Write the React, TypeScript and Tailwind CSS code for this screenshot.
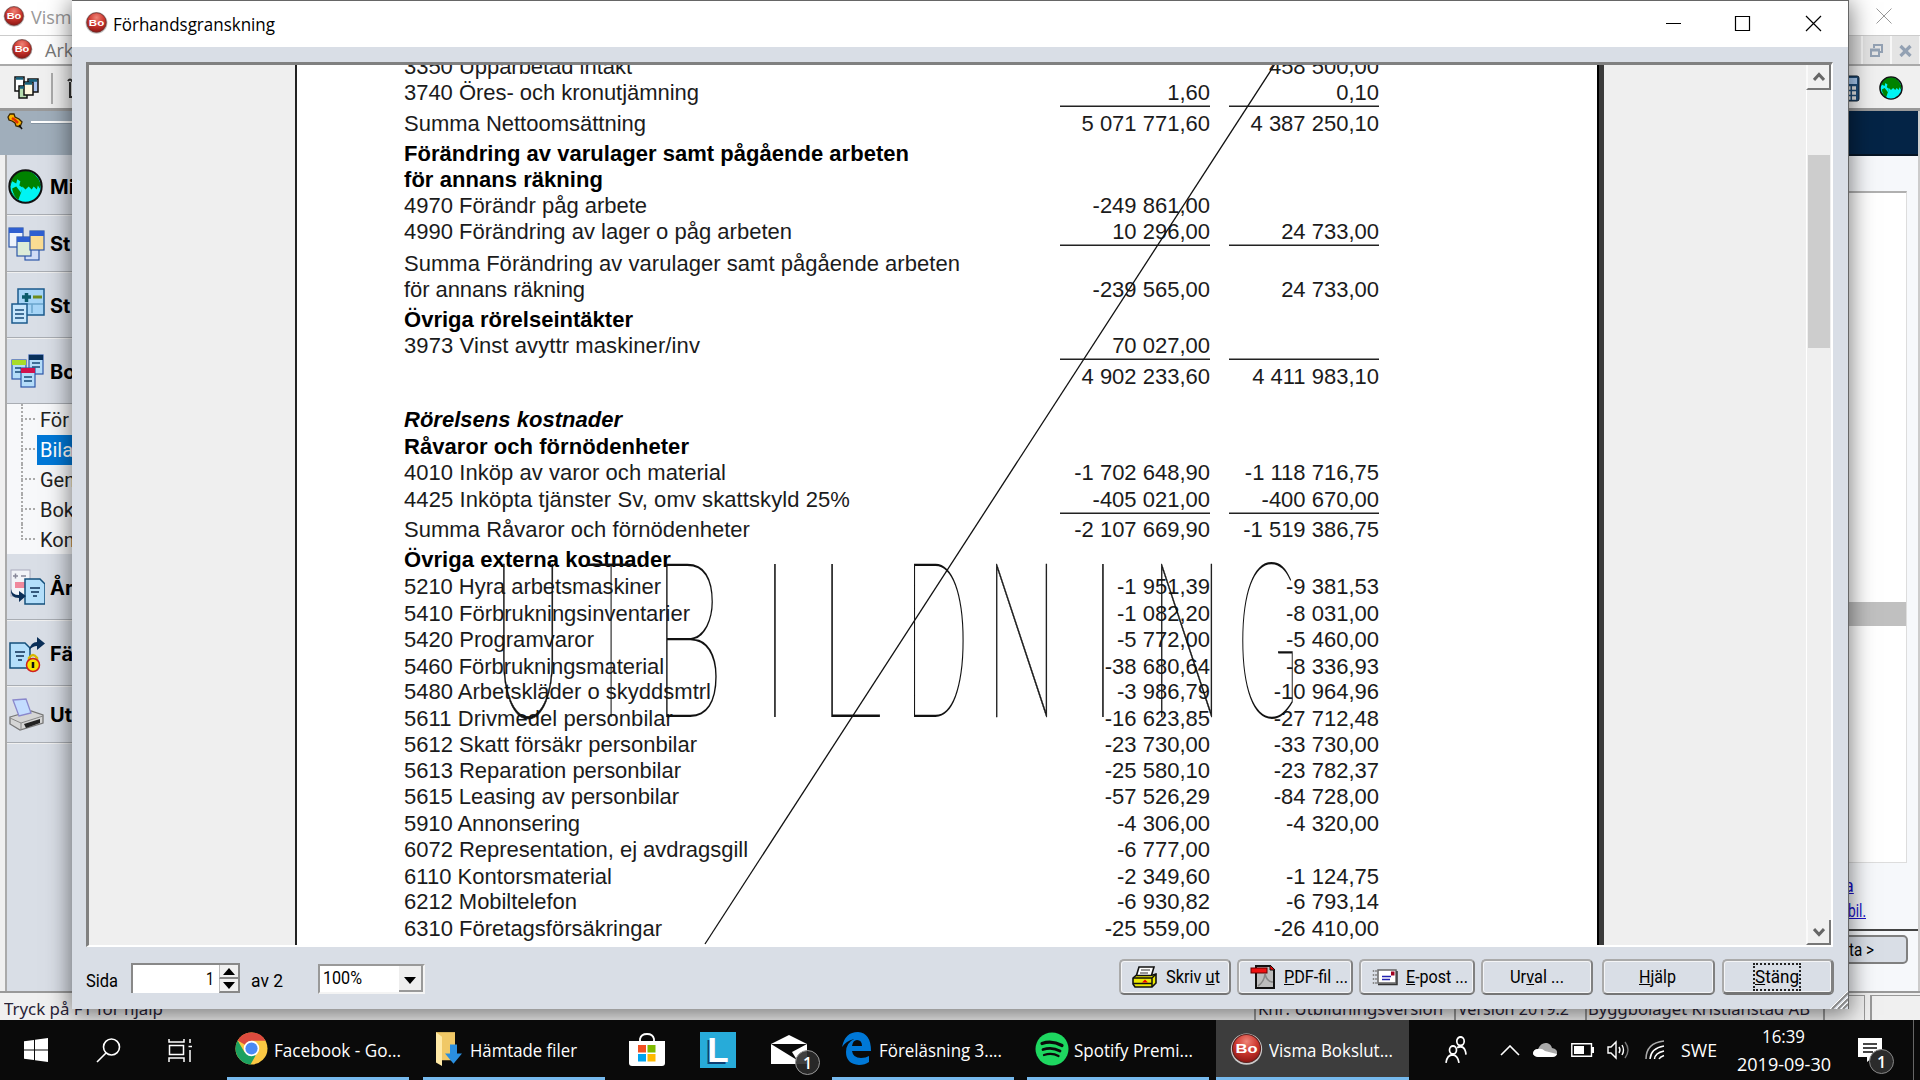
import React, { useLayoutEffect, useRef } from "react";

/* Text set to an exact width, by tracking or by horizontal scaling. */
function Fit({ w, track = false, className = "", children }: { w: number; track?: boolean; className?: string; children: React.ReactNode }) {
  const ref = useRef<HTMLSpanElement>(null);
  useLayoutEffect(() => {
    const el = ref.current;
    if (!el) return;
    el.style.transform = "none";
    el.style.letterSpacing = "0px";
    const natural = el.getBoundingClientRect().width;
    if (track) {
      const n = (el.textContent || "").length;
      el.style.letterSpacing = (w - natural) / n + "px";
    } else {
      el.style.transform = `scaleX(${w / natural})`;
    }
  }, [w, track]);
  return (
    <span className={`block shrink-0 whitespace-nowrap ${className}`} style={{ width: w }}>
      <span ref={ref} className="inline-block origin-left whitespace-pre">{children}</span>
    </span>
  );
}

function Bo({ size, ring = false }: { size: number; ring?: boolean }) {
  return (
    <svg width={size} height={size} viewBox="0 0 24 24" className="shrink-0">
      <defs>
        <radialGradient id="bo" cx="50%" cy="25%" r="75%">
          <stop offset="0" stopColor="#ee8478" />
          <stop offset=".5" stopColor="#cf3a31" />
          <stop offset="1" stopColor="#8e1613" />
        </radialGradient>
      </defs>
      <circle cx="12" cy="12.4" r="11.4" fill={ring ? "#c9c9c9" : "#8d8d8d"} opacity={ring ? 1 : 0.55} />
      <circle cx="12" cy="12" r="10.2" fill="url(#bo)" stroke={ring ? "#5b2421" : "#6d2a27"} strokeWidth=".8" />
      <text x="12" y="15.4" textAnchor="middle" textLength="16" lengthAdjust="spacingAndGlyphs" fontSize="9.5" fontWeight="700" fontFamily="Liberation Sans, sans-serif" fill="#fff">Bo</text>
    </svg>
  );
}

function Globe({ size }: { size: number }) {
  return (
    <svg width={size} height={size} viewBox="0 0 34 34" className="shrink-0">
      <circle cx="17" cy="17" r="15.5" fill="#00f4f4" />
      <path d="M4 9 Q9 1.5 17 1.5 Q27 2 32 15 L31 19 L29 16 L28 20 L25 17 L23 20 L20 17 L17 20 L14 17 L13 22 L10 30 Q2 24 1.5 17Z" fill="#008200" />
      <path d="M2 17 L4 12 L8 14 L9 10 L12 12 L11 16 L14 18 L13 22 L10 24 L8 20 L5 21 L8 27 Q2 23 2 17Z" fill="#00f4f4" />
      <path d="M4 19 L8 17 L12 22 L10 29 Q5 26 4 19Z" fill="#008200" />
      <circle cx="17" cy="17" r="15.7" fill="none" stroke="#111" strokeWidth="2" />
    </svg>
  );
}

type Row = { l?: string; w?: number; a?: string; b?: string; h: number; s?: "b" | "i"; rule?: boolean };

const rows: Row[] = [
  { l: "3350 Upparbetad intäkt", w: 228, b: "458 500,00", h: 16 },
  { l: "3740 Öres- och kronutjämning", w: 295, a: "1,60", b: "0,10", h: 26 },
  { l: "Summa Nettoomsättning", w: 242, a: "5 071 771,60", b: "4 387 250,10", h: 31, rule: true },
  { l: "Förändring av varulager samt pågående arbeten", w: 505, h: 30, s: "b" },
  { l: "för annans räkning", w: 199, h: 26, s: "b" },
  { l: "4970 Förändr påg arbete", w: 243, a: "-249 861,00", h: 26 },
  { l: "4990 Förändring av lager o påg arbeten", w: 388, a: "10 296,00", b: "24 733,00", h: 26 },
  { l: "Summa Förändring av varulager samt pågående arbeten", w: 556, h: 32, rule: true },
  { l: "för annans räkning", w: 181, a: "-239 565,00", b: "24 733,00", h: 26 },
  { l: "Övriga rörelseintäkter", w: 229, h: 30, s: "b" },
  { l: "3973 Vinst avyttr maskiner/inv", w: 296, a: "70 027,00", h: 26 },
  { a: "4 902 233,60", b: "4 411 983,10", h: 31, rule: true },
  { l: "Rörelsens kostnader", w: 218, h: 43, s: "i" },
  { l: "Råvaror och förnödenheter", w: 285, h: 27, s: "b" },
  { l: "4010 Inköp av varor och material", w: 322, a: "-1 702 648,90", b: "-1 118 716,75", h: 26 },
  { l: "4425 Inköpta tjänster Sv, omv skattskyld 25%", w: 446, a: "-405 021,00", b: "-400 670,00", h: 27 },
  { l: "Summa Råvaror och förnödenheter", w: 346, a: "-2 107 669,90", b: "-1 519 386,75", h: 30, rule: true },
  { l: "Övriga externa kostnader", w: 267, h: 30, s: "b" },
  { l: "5210 Hyra arbetsmaskiner", w: 257, a: "-1 951,39", b: "-9 381,53", h: 27 },
  { l: "5410 Förbrukningsinventarier", w: 286, a: "-1 082,20", b: "-8 031,00", h: 27 },
  { l: "5420 Programvaror", w: 190, a: "-5 772,00", b: "-5 460,00", h: 26 },
  { l: "5460 Förbrukningsmaterial", w: 260, a: "-38 680,64", b: "-8 336,93", h: 27 },
  { l: "5480 Arbetskläder o skyddsmtrl", w: 307, a: "-3 986,79", b: "-10 964,96", h: 25 },
  { l: "5611 Drivmedel personbilar", w: 269, a: "-16 623,85", b: "-27 712,48", h: 27 },
  { l: "5612 Skatt försäkr personbilar", w: 293, a: "-23 730,00", b: "-33 730,00", h: 26 },
  { l: "5613 Reparation personbilar", w: 277, a: "-25 580,10", b: "-23 782,37", h: 26 },
  { l: "5615 Leasing av personbilar", w: 275, a: "-57 526,29", b: "-84 728,00", h: 26 },
  { l: "5910 Annonsering", w: 176, a: "-4 306,00", b: "-4 320,00", h: 27 },
  { l: "6072 Representation, ej avdragsgill", w: 344, a: "-6 777,00", h: 26 },
  { l: "6110 Kontorsmaterial", w: 208, a: "-2 349,60", b: "-1 124,75", h: 27 },
  { l: "6212 Mobiltelefon", w: 173, a: "-6 930,82", b: "-6 793,14", h: 25 },
  { l: "6310 Företagsförsäkringar", w: 258, a: "-25 559,00", b: "-26 410,00", h: 27 },
];

function Amount({ v, rule }: { v?: string; rule?: boolean }) {
  return (
    <div className={`flex h-full w-[150px] shrink-0 items-end justify-end ${rule ? "shadow-[0_-1.5px_0_#222]" : ""}`}>
      <span className="whitespace-pre">{v}</span>
    </div>
  );
}

const mark: { c: string; x: number; w: number }[] = [
  { c: "U", x: 503, w: 50 }, { c: "T", x: 587, w: 48 }, { c: "B", x: 666, w: 51 }, { c: "I", x: 774, w: 2 }, { c: "L", x: 831, w: 49 },
  { c: "D", x: 914, w: 50 }, { c: "N", x: 996, w: 51 }, { c: "I", x: 1102, w: 2 }, { c: "N", x: 1161, w: 51 }, { c: "G", x: 1242, w: 51 },
];

/* Large hairline letters laid over the page; each is squeezed to its own slot. */
function MarkLetter({ c, x, w }: { c: string; x: number; w: number }) {
  const ref = useRef<HTMLSpanElement>(null);
  useLayoutEffect(() => {
    const el = ref.current;
    const ctx = document.createElement("canvas").getContext("2d");
    if (!el || !ctx) return;
    ctx.font = "100 218px Lato";
    const m = ctx.measureText(c);
    const ink = m.actualBoundingBoxRight + m.actualBoundingBoxLeft;
    const k = c === "I" ? 0.6 : w / ink;
    el.style.transform = `translateX(${m.actualBoundingBoxLeft * k}px) scaleX(${k})`;
  }, [c, w]);
  return (
    <span className="absolute top-[459px] h-[218px] leading-[218px]" style={{ left: x - 297 }}>
      <span ref={ref} className={`inline-block origin-left ${c === "U" || c === "N" ? "[-webkit-text-stroke:0.7px_#111]" : ""}`}>{c}</span>
    </span>
  );
}

function Report() {
  return (
    <div className="relative h-full w-[1302px] shrink-0 overflow-hidden border-l-2 border-[#222] bg-white font-['Liberation_Sans',Arial,sans-serif] text-[22px] leading-[28px] text-[#1b1b1b]">
      {rows.map((r, i) => (
        <div key={i} className="flex items-end pl-[107px]" style={{ height: r.h }}>
          <div className={`w-[656px] shrink-0 ${r.s === "b" ? "font-bold text-black" : r.s === "i" ? "font-bold text-black italic" : ""}`}>
            {r.l && <Fit w={r.w || 100} track>{r.l}</Fit>}
          </div>
          <Amount v={r.a} rule={r.rule} />
          <div className="w-[19px] shrink-0" />
          <Amount v={r.b} rule={r.rule} />
        </div>
      ))}
      <svg className="absolute inset-0" width="1300" height="880" viewBox="297 65 1300 880">
        <line x1="1274.4" y1="65" x2="705" y2="944" stroke="#111" strokeWidth="1.3" />
      </svg>
      <div className="absolute inset-0 font-['Lato',sans-serif] text-[218px] font-thin text-[#111]">
        {mark.map((m, i) => <MarkLetter key={i} {...m} />)}
      </div>
    </div>
  );
}

function ArrowButton({ down = false }: { down?: boolean }) {
  return (
    <div className="flex h-[25px] w-[25px] shrink-0 items-center justify-center border-r-2 border-b-2 border-l-2 border-r-[#777] border-b-[#777] border-l-[#fafafa] bg-[#f0f0f0]">
      <svg width="12" height="10" viewBox="0 0 12 10" fill="none" stroke="#666" strokeWidth="3">
        {down ? <path d="M1 2 L6 7.5 L11 2" /> : <path d="M1 8 L6 2.5 L11 8" />}
      </svg>
    </div>
  );
}

function Button({ cls, children }: { cls: string; children: React.ReactNode }) {
  return (
    <div className={`flex h-[36px] shrink-0 items-center rounded-[5px] border-2 border-t-[#aaa] border-r-[#808080] border-b-[#757575] border-l-[#aaa] bg-[#d9dee6] shadow-[inset_0_0_0_1px_#f4f5f7] ${cls}`}>
      {children}
    </div>
  );
}

const ui = "font-['Roboto',sans-serif] text-[18px] leading-[24px] text-black";

function Footer() {
  return (
    <div className={`flex h-[62px] items-start pt-[12px] pl-[14px] ${ui}`}>
      <Fit w={32} className="mt-[10px]">Sida</Fit>
      <div className="mt-[4px] ml-[13px] flex h-[30px] w-[109px] border-t-2 border-l-2 border-[#888] bg-white">
        <div className="flex flex-1 items-center justify-end pr-[5px]"><Fit w={8}>1</Fit></div>
        <div className="flex w-[21px] flex-col">
          {[0, 1].map((k) => (
            <div key={k} className="flex h-[14px] items-center justify-center border-r-2 border-b-2 border-l border-r-[#888] border-b-[#888] border-l-[#bbb] bg-[#f0f0f0]">
              <svg width="12" height="7" viewBox="0 0 12 7"><path d={k ? "M0 0H12L6 7Z" : "M0 7H12L6 0Z"} fill="#000" /></svg>
            </div>
          ))}
        </div>
      </div>
      <Fit w={32} className="mt-[10px] ml-[11px]">av 2</Fit>
      <div className="mt-[5px] ml-[35px] flex h-[30px] w-[107px] border-2 border-t-[#999] border-r-[#f4f4f4] border-b-[#f4f4f4] border-l-[#999] bg-white">
        <div className="flex-1 pl-[3px]"><Fit w={39}>100%</Fit></div>
        <div className="flex w-[24px] items-center justify-center border-r-2 border-b-2 border-[#999] bg-[#eee]">
          <svg width="12" height="7" viewBox="0 0 12 7" className="mt-1"><path d="M0 0H12L6 7Z" fill="#000" /></svg>
        </div>
      </div>
      <div className="ml-auto flex pr-[14px]">
        <Button cls="w-[112px] pl-[11px]">
          <svg width="26" height="23" viewBox="0 0 26 23" className="mr-[8px] shrink-0">
            <path d="M7 1H22L19 11H4Z" fill="#fff" stroke="#111" strokeWidth="1.6" />
            <path d="M9 4H18M8 7H16" stroke="#777" strokeWidth="1.5" />
            <path d="M1 12L4 9.5H19L24 8V17L20 21H3L1 18Z" fill="#ece800" stroke="#111" strokeWidth="1.6" />
            <path d="M1 12H20V21M20 12L24 8M1 17.5H20" fill="none" stroke="#111" strokeWidth="1.5" />
            <path d="M10 16.5L13 13.5L16 16.5Z" fill="#e00" />
          </svg>
          <Fit w={54}>Skriv <u>u</u>t</Fit>
        </Button>
        <Button cls="ml-[6px] w-[116px] pl-[11px]">
          <svg width="26" height="26" viewBox="0 0 26 26" className="mr-[8px] shrink-0">
            <path d="M6 2H20L24 6V24H6Z" fill="#bdbdbd" stroke="#111" strokeWidth="2" />
            <path d="M8 22Q14 18 15 10Q17 18 23 18" fill="none" stroke="#888" strokeWidth="1.6" />
            <path d="M20 1L25 6H20Z" fill="#e00" stroke="#111" />
            <rect x="1" y="4" width="16" height="5" fill="#f01010" stroke="#600" />
          </svg>
          <Fit w={64}><u>P</u>DF-fil ...</Fit>
        </Button>
        <Button cls="ml-[6px] w-[116px] pl-[11px]">
          <svg width="26" height="18" viewBox="0 0 26 18" className="mr-[8px] shrink-0">
            <path d="M1.5 2V16M4 2V16" stroke="#888" strokeWidth="1.5" strokeDasharray="2 2" />
            <rect x="6" y="2" width="18" height="13" fill="#fff" stroke="#666" strokeWidth="1.5" />
            <path d="M25 3V16.5H6" fill="none" stroke="#333" strokeWidth="1.5" />
            <path d="M10 8.5H19M10 11.5H18" stroke="#2222b0" strokeWidth="1.6" />
            <rect x="19" y="3.5" width="3.5" height="4" fill="#a00020" />
          </svg>
          <Fit w={62}><u>E</u>-post ...</Fit>
        </Button>
        <Button cls="ml-[6px] w-[112px] pl-[27px]"><Fit w={54}>Ur<u>v</u>al ...</Fit></Button>
        <Button cls="ml-[9px] w-[113px] pl-[35px]"><Fit w={37}><u>H</u>jälp</Fit></Button>
        <Button cls="ml-[7px] w-[112px] border-r-[3px] border-b-[3px] pl-[29px]">
          <div className="border-2 border-dotted border-[#222]"><Fit w={44}><u>S</u>täng</Fit></div>
        </Button>
      </div>
    </div>
  );
}

function Dialog() {
  return (
    <div className="absolute top-0 left-[72px] flex h-[1009px] w-[1777px] flex-col border-t border-r border-[#666] bg-[#d9dee6] shadow-[0_4px_22px_2px_rgba(0,0,0,0.5)]">
      <div className="flex h-[46px] shrink-0 items-start bg-white pt-[10px] pl-[13px]">
        <Bo size={23} />
        <Fit w={162} className="-mt-px ml-[5px] font-['Open_Sans',sans-serif] text-[18px] leading-[28px] text-black">Förhandsgranskning</Fit>
        <svg width="157" height="18" viewBox="0 0 157 18" fill="none" stroke="#000" strokeWidth="1.2" className="mt-[4px] mr-[26px] ml-auto">
          <path d="M1 8.5H16M70.5 1.5H84.5V15.5H70.5ZM141 1L156 16M156 1L141 16" />
        </svg>
      </div>
      <div className="mt-[15px] mr-[15px] ml-[14px] flex h-[885px] shrink-0 border-t-[3px] border-r-2 border-b-2 border-l-[3px] border-t-[#808080] border-r-white border-b-white border-l-[#808080] bg-[#efefef]">
        <div className="w-[206px] shrink-0" />
        <Report />
        <div className="h-full w-[7px] shrink-0 border-l-2 border-black bg-[#3b3b3b]" />
        <div className="ml-auto flex h-full w-[25px] shrink-0 flex-col">
          <ArrowButton />
          <div className="relative flex-1 border-l border-white">
            <div className="mt-[65px] ml-px h-[193px] w-[22px] bg-[#cdcdcd]" />
          </div>
          <ArrowButton down />
        </div>
      </div>
      <Footer />
      <svg className="absolute right-0 bottom-0" width="18" height="18" viewBox="0 0 18 18">
        <path d="M2 18L18 2M8 18L18 8M13 18L18 13" stroke="#888" strokeWidth="2" />
        <path d="M0 18L18 0M6 18L18 6M11 18L18 11" stroke="#fff" />
      </svg>
    </div>
  );
}

function WinIcon({ children }: { children: React.ReactNode }) {
  return <svg width="38" height="38" viewBox="0 0 38 38" className="shrink-0">{children}</svg>;
}

function MiniWindow({ x, y, fill, head = "#2f5fd0" }: { x: number; y: number; fill: string; head?: string }) {
  return (
    <g>
      <rect x={x} y={y} width="14" height="19" fill={fill} stroke="#2d57a8" strokeWidth="1.2" />
      <rect x={x} y={y} width="14" height="5" fill={head} />
    </g>
  );
}

const doc = (x: number, y: number) => (
  <g>
    <path d={`M${x} ${y}h15l5 5v20h-20z`} fill="#b4dffb" stroke="#14507c" strokeWidth="1.5" />
    <path d={`M${x + 5} ${y + 9}h10M${x + 6} ${y + 13}h8M${x + 8} ${y + 17}h4`} stroke="#0d2f55" strokeWidth="1.7" />
  </g>
);

function SideItem({ cls, label, children }: { cls: string; label: string; children: React.ReactNode }) {
  return (
    <div className={`flex shrink-0 items-center overflow-hidden border-b border-[#a9adb3] pt-[2px] shadow-[0_1px_0_#f0f0f0] ${cls}`}>
      <div className="w-[43px] shrink-0">{children}</div>
      <span className="whitespace-nowrap font-['Inter',sans-serif] text-[20px] font-bold text-black">{label}</span>
    </div>
  );
}

function Sidebar() {
  return (
    <div className="flex w-[72px] flex-col">
      <div className="flex h-[44px] items-start bg-[#a0aebb] pt-[2px] pl-[7px]">
        <svg width="17" height="17" viewBox="0 0 17 17">
          <path d="M1 4L3 1H7L8 4L12 6L15 9L13 14L9 13L8 10L5 8L2 7Z" fill="#f8b400" stroke="#3a2500" strokeWidth="1.3" />
          <path d="M5 5L8 7L11 10" stroke="#e03000" strokeWidth="2.500" />
          <path d="M12 12L15 16" stroke="#111" strokeWidth="1.5" />
        </svg>
        <div className="mt-[8px] ml-[7px] h-[3px] flex-1 border-b border-[#8493a1] bg-white" />
      </div>
      <div className="ml-[5px] flex flex-1 flex-col border-l-2 border-[#aaa] bg-[#d9dee6]">
        <SideItem cls="h-[60px] pt-[4px]" label="Mi"><div className="pl-[1px]"><Globe size={35} /></div></SideItem>
        <SideItem cls="h-[57px]" label="St">
          <WinIcon><MiniWindow x={2} y={3} fill="#eef3fb" /><MiniWindow x={18} y={16} fill="#cfdcf6" /><MiniWindow x={10} y={12} fill="#dcebd8" /><MiniWindow x={23} y={6} fill="#fbdc92" /></WinIcon>
        </SideItem>
        <SideItem cls="h-[66px]" label="St">
          <WinIcon>
            <rect x="11" y="2" width="26" height="26" fill="#a6d5f7" stroke="#1b5a8c" strokeWidth="1.5" />
            <path d="M15 10h9M19.500 6v9" stroke="#0a5b6b" strokeWidth="3.500" /><path d="M26 10h9" stroke="#6f8c1c" strokeWidth="3" />
            <path d="M14 17h22M25 17v9" stroke="#6ba5cd" strokeWidth="1.500" />
            <rect x="5" y="17" width="15" height="19" fill="#c7e6fc" stroke="#1b5a8c" strokeWidth="1.500" /><path d="M8 23h9M8 27h9M8 31h9" stroke="#174a77" strokeWidth="1.400" />
          </WinIcon>
        </SideItem>
        <SideItem cls="h-[66px]" label="Bo">
          <WinIcon>
            <MiniWindow x={22} y={2} fill="#b4dcf9" head="#08305a" /><MiniWindow x={5} y={7} fill="#b4dcf9" head="#a8dc28" /><MiniWindow x={14} y={15} fill="#b4dcf9" head="#d0114c" />
            <path d="M25 10h8M25 14h8M8 15h6M8 19h6M17 24h8M17 28h8" stroke="#174a77" strokeWidth="1.300" />
          </WinIcon>
        </SideItem>
        <div className="flex h-[150px] shrink-0 bg-[#f7f8fa]">
          <div className="ml-[14px] flex w-[14px] flex-col">
            {[0, 1, 2, 3, 4].map((i) => (
              <div key={i} className="h-[30px]">
                <div className="h-[16px] border-b-2 border-l-2 border-dotted border-[#aaa]" />
                {i < 4 && <div className="h-[14px] border-l-2 border-dotted border-[#aaa]" />}
              </div>
            ))}
          </div>
          <div className="ml-[2px] flex-1 overflow-hidden pt-px font-['Roboto',sans-serif] text-[20px] leading-[30px] text-[#222]">
            {["För", "Bila", "Gen", "Bok", "Kon"].map((t, i) => (
              <div key={t} className={`h-[30px] pl-[3px] ${i === 1 ? "bg-[#0078d7] text-white" : ""}`}>{t}</div>
            ))}
          </div>
        </div>
        <SideItem cls="h-[66px]" label="År">
          <WinIcon>
            <rect x="4" y="1" width="19" height="26" fill="#f2f4f8" stroke="#aab" /><path d="M6 7h5M8.500 4.500v5M14 7h5" stroke="#889" strokeWidth="1.500" />
            <rect x="8" y="13" width="14" height="6" fill="#f0889c" />{doc(18, 10)}
            <path d="M4 20Q5 26 12 26V22L19 27L12 33V29Q3 29 4 20Z" fill="#0b2f58" />
          </WinIcon>
        </SideItem>
        <SideItem cls="h-[66px]" label="Fä">
          <WinIcon>
            {doc(3, 8)}<path d="M22 15Q24 7 30 7V2L38 8.500L30 15V11Q26 11 22 15Z" fill="#0b2f58" />
            <path d="M22 27V23Q26 17 30 23V27" fill="none" stroke="#d8b800" strokeWidth="2.500" /><circle cx="26" cy="30" r="6.500" fill="#f6e400" stroke="#d02020" strokeWidth="1.500" /><path d="M26 27v6" stroke="#111" strokeWidth="2.500" />
          </WinIcon>
        </SideItem>
        <SideItem cls="h-[57px]" label="Ut">
          <WinIcon>
            <path d="M3 21L24 15L36 19V27L13 34L3 28Z" fill="#d5d5d5" stroke="#777" strokeWidth="1.300" /><path d="M3 22L14 27L36 20M14 27V34" fill="none" stroke="#888" />
            <path d="M6 4L19 3L24 17L12 20Z" fill="#c3dcff" stroke="#8a88cc" strokeWidth="1.300" />
            <path d="M17 28L33 23V27L19 32Z" fill="#222" />
          </WinIcon>
        </SideItem>
      </div>
    </div>
  );
}

function RightPane() {
  return (
    <div className="ml-auto flex w-[80px] flex-col border-r-2 border-[#ccc] bg-[#f6f8fb]">
      <div className="h-[45px] shrink-0 border-b-2 border-[#061525] bg-[#042446]" />
      <div className="mt-[35px] mr-[11px] h-[672px] shrink-0 border-t-2 border-r border-b border-t-[#b0b0b0] border-[#ddd] bg-white">
        <div className="mt-[409px] h-[24px] bg-[#c0c0c0]" />
      </div>
      <div className="h-[68px] shrink-0 border-b-2 border-[#444] pl-[8px] font-['Roboto',sans-serif] text-[18px] leading-[25px] text-[#1a10c8]">
        <div className="mt-[10px] -ml-[4px]"><u>a</u></div>
        <Fit w={18}><u>bil.</u></Fit>
      </div>
      <div className="mt-[4px] mr-[10px] flex h-[29px] items-center rounded-[5px] border-2 border-[#808080] bg-[#d9dee6] pl-[7px] text-black">
        <Fit w={25} className="font-['Roboto',sans-serif] text-[18px]">ta &gt;</Fit>
      </div>
    </div>
  );
}

function BackgroundApp() {
  return (
    <div className="flex h-[1020px] flex-col bg-[#f0f0f0]">
      <div className="flex h-[35px] shrink-0 items-center bg-white pb-[3px] pl-[3px]">
        <Bo size={22} />
        <span className="mt-[3px] ml-[6px] font-['Open_Sans',sans-serif] text-[18px] text-[#999]">Visma</span>
        <svg width="16" height="16" viewBox="0 0 16 16" stroke="#999" className="mr-[28px] ml-auto"><path d="M.5 .5L15.500 15.500M15.500 .5L.5 15.500" /></svg>
      </div>
      <div className="flex h-[31px] shrink-0 items-center border-t border-b-2 border-t-[#ccc] border-b-[#aaa] bg-white pl-[11px]">
        <div className="mb-[3px] flex"><Bo size={22} /></div>
        <span className="ml-[12px] font-['Open_Sans',sans-serif] text-[18px] text-[#777]">Arkiv</span>
        <div className="ml-auto flex h-full w-[72px] gap-[2px] bg-[#f7f7f7]">
          <div className="w-[13px] bg-[#e2e2e2]" />
          {[0, 1].map((k) => (
            <div key={k} className="flex w-[27px] items-center justify-center bg-[#e4e4e4]">
              <svg width="13" height="13" viewBox="0 0 13 13" fill="none" stroke="#93a1b3" strokeWidth="2">
                {k ? <path d="M1.500 2L11.500 12M11.500 2L1.500 12" strokeWidth="3.200" /> : <path d="M4 4V1H12V8H9M1 5.500H9V12H1ZM1 6.500H9" />}
              </svg>
            </div>
          ))}
        </div>
      </div>
      <div className="flex h-[45px] shrink-0 items-center border-b-[3px] border-[#999] pt-[2px] pl-[14px]">
        <svg width="26" height="24" viewBox="0 0 26 24" stroke="#111" strokeWidth="1.500">
          <path d="M1 1H10V15H1Z" fill="#fff" /><path d="M14 3H24V16H14Z" fill="#a9c4f0" /><path d="M5 10H13V22H5Z" fill="#b7dcae" /><path d="M10 6H19V19H10Z" fill="#fff8e0" />
          <path d="M2 2.500H9M15 4.500H23M11 7.500H18M6 11.500H10" stroke="#15607c" strokeWidth="2.500" />
        </svg>
        <div className="ml-[11px] h-[31px] w-[2px] bg-[#aaa]" />
        <svg width="14" height="20" viewBox="0 0 14 20" fill="none" stroke="#333" strokeWidth="2" className="ml-[14px]"><path d="M1 3Q3 0 5 3H12M3 4V19H12" /></svg>
        <div className="mr-[17px] ml-auto flex items-center">
          <svg width="22" height="27" viewBox="0 0 22 27" className="mr-[19px]">
            <rect x="1" y="1" width="20" height="25" rx="2" fill="#1e4c78" stroke="#123" /><rect x="3" y="3" width="16" height="6" fill="#a8c9ef" />
            <path d="M3 13h16M3 18h16M3 23h16" stroke="#e4e4e4" strokeWidth="3.500" strokeDasharray="4 1.500" />
          </svg>
          <Globe size={24} />
        </div>
      </div>
      <div className="flex h-[880px] shrink-0">
        <Sidebar />
        <RightPane />
      </div>
      <div className="flex flex-1 items-end border-t-2 border-[#999] font-['Noto_Sans',sans-serif] text-[16px] leading-[22px] text-[#2a2438]">
        <Fit w={159} className="ml-[4px]">Tryck på F1 för hjälp</Fit>
        <div className="ml-auto flex items-end">
          <div className="flex h-[25px] w-[200px] items-end border-l-2 border-[#999] pl-[2px]"><Fit w={185}>Knr: Utbildningsversion</Fit></div>
          <div className="flex h-[25px] w-[131px] items-end border-l-2 border-[#999] pl-[2px]"><Fit w={111}>Version 2019.2</Fit></div>
          <div className="flex h-[25px] w-[238px] items-end border-l-2 border-[#999] pl-[1px]"><Fit w={222}>Byggbolaget Kristianstad AB</Fit></div>
          <div className="mr-[5px] h-[25px] w-[42px] border-t border-r border-l-2 border-[#999]" />
          <div className="h-[25px] w-[50px] border-t border-l-2 border-[#999]" />
        </div>
      </div>
    </div>
  );
}

function Task({ cls, label, w, children }: { cls: string; label: string; w: number; children: React.ReactNode }) {
  return (
    <div className={`flex h-full shrink-0 items-center border-b-[3px] border-[#76b9ed] ${cls}`}>
      {children}
      <Fit w={w} className="mt-[2px] leading-[24px]">{label}</Fit>
    </div>
  );
}

function Taskbar() {
  return (
    <div className="flex h-[60px] items-center bg-[#0a0a0a] font-['Open_Sans',sans-serif] text-[17.5px] text-white">
      <svg width="24" height="24" viewBox="0 0 24 24" fill="#fff" className="ml-[24px] shrink-0"><path d="M0 3.300L10 2V11.500H0ZM11 1.800L24 0V11.500H11ZM0 12.500H10V22L0 20.700ZM11 12.500H24V24L11 22.200Z" /></svg>
      <svg width="25" height="25" viewBox="0 0 25 25" fill="none" stroke="#fff" strokeWidth="1.600" className="ml-[48px] shrink-0"><circle cx="15.500" cy="9" r="8" /><path d="M10 15L1 24" /></svg>
      <svg width="25" height="25" viewBox="0 0 25 25" fill="none" stroke="#fff" strokeWidth="1.500" className="ml-[47px] shrink-0"><path d="M1 1V4H16V1M1 24V20H16V24M1.500 7.500H15.500V16.500H1.500ZM22 1V5M22 12V24M20.500 8.500H24" /></svg>
      <Task cls="ml-[34px] w-[182px] pl-[8px]" label="Facebook - Go..." w={127}>
        <svg width="33" height="33" viewBox="0 0 34 34" className="mr-[6px] shrink-0">
          <circle cx="17" cy="17" r="16.500" fill="#fbc843" />
          <path d="M17 17L2.700 8.700A16.500 16.500 0 0 1 31.500 9H17Z" fill="#dd4b3e" /><path d="M17 17L10 21L2.700 8.700A16.500 16.500 0 0 0 16 33.500L23 21Z" fill="#1ba160" />
          <circle cx="17" cy="17" r="8" fill="#fff" /><circle cx="17" cy="17" r="6.300" fill="#4a8af4" />
        </svg>
      </Task>
      <Task cls="ml-[14px] w-[182px] pl-[12px]" label="Hämtade filer" w={107}>
        <svg width="28" height="36" viewBox="0 0 28 32" preserveAspectRatio="none" className="mr-[7px] shrink-0">
          <path d="M1 1H20V26H1Z" fill="#f0c866" /><path d="M1 1L7 5V31L1 28Z" fill="#ffe9a5" />
          <path d="M15 12H22V20H27L18.500 29L10 20H15Z" fill="#2a8fe0" />
        </svg>
      </Task>
      <svg width="36" height="34" viewBox="0 0 36 34" className="ml-[24px] shrink-0">
        <path d="M11 9V6Q12 1 18 1Q24 1 25 6V9" fill="none" stroke="#fff" strokeWidth="1.800" /><path d="M0 8H36V30Q36 33 33 33H3Q0 33 0 30Z" fill="#fff" />
        <rect x="9" y="12" width="8" height="7.500" fill="#f25022" /><rect x="18.500" y="12" width="8" height="7.500" fill="#7fba00" /><rect x="9" y="21" width="8" height="7.500" fill="#00a4ef" /><rect x="18.500" y="21" width="8" height="7.500" fill="#ffb900" />
      </svg>
      <div className="ml-[35px] flex h-[36px] w-[36px] shrink-0 items-center justify-center bg-[#27abd9] font-['Liberation_Sans',sans-serif] text-[35px] leading-[36px] font-bold [text-shadow:-2px_2px_0_#0d3f73]">L</div>
      <div className="relative ml-[35px] h-[30px] w-[37px] shrink-0">
        <svg width="37" height="30" viewBox="0 0 37 30"><path d="M0 9L18 0L36 9V29H0Z" fill="#fff" /><path d="M0 9H36L21 17L26 25L0 9Z" fill="#0a0a0a" /></svg>
        <div className="absolute top-[15px] left-[24px] flex h-[25px] w-[25px] items-center justify-center rounded-full border border-[#999] bg-[#2b2b2b]/90 text-[16px] font-semibold">1</div>
      </div>
      <Task cls="ml-[24px] w-[182px] pl-[10px]" label="Föreläsning 3...." w={123}>
        <svg width="30" height="33" viewBox="0 0 30 33" className="mr-[7px] shrink-0"><path d="M0 15Q3 0 16 0Q29 1 29 19H10Q11 26 19 26Q24 26 27 24V30Q23 33 17 33Q4 32 4 20Q4 11 12 7Q4 9 0 15ZM10 14H20Q20 8 15 8Q11 8 10 14Z" fill="#0078d7" fillRule="evenodd" /></svg>
      </Task>
      <Task cls="ml-[13px] w-[182px] pl-[8px]" label="Spotify Premi..." w={119}>
        <svg width="34" height="34" viewBox="0 0 34 34" className="mr-[5px] shrink-0"><circle cx="17" cy="17" r="16.500" fill="#1ed760" /><g fill="none" stroke="#0a0a0a" strokeLinecap="round"><path d="M7 11.500Q17 8 27 13.500" strokeWidth="3.200" /><path d="M8 17.500Q17 14.500 25 19" strokeWidth="2.800" /><path d="M9 23Q17 20.500 23.500 24" strokeWidth="2.300" /></g></svg>
      </Task>
      <Task cls="ml-[7px] w-[193px] bg-[#3d3d3d] pl-[14px]" label="Visma Bokslut..." w={124}>
        <div className="mr-[6px] flex"><Bo size={33} ring /></div>
      </Task>
      <div className="flex flex-1 items-center">
        <svg width="23" height="28" viewBox="0 0 23 24" preserveAspectRatio="none" fill="none" stroke="#fff" strokeWidth="1.700" className="ml-[36px] shrink-0"><circle cx="15.500" cy="4.500" r="3.700" /><circle cx="8" cy="12" r="3.500" /><path d="M12 10Q20 7 21 16M1 23Q2 16 8 16Q13 17 14 23" /></svg>
        <svg width="20" height="11" viewBox="0 0 20 11" fill="none" stroke="#fff" strokeWidth="1.600" className="ml-[32px] shrink-0"><path d="M1 10L10 1L19 10" /></svg>
        <svg width="25" height="16" viewBox="0 0 25 16" className="ml-[13px] shrink-0"><path d="M5 7Q8 0 14 1Q18 2 19 6Q25 7 24 12Q23 15 19 15H5Q0 14 0 11Q1 7 5 7Z" fill="#aaa" /><path d="M5 7Q9 6 12 9L24 12Q23 15 19 15H5Q0 14 0 11Q1 7 5 7Z" fill="#fff" /></svg>
        <svg width="23" height="14" viewBox="0 0 23 14" className="ml-[13px] shrink-0"><path d="M.8 .8H20.500V13.200H.8Z" fill="none" stroke="#fff" strokeWidth="1.400" /><rect x="3" y="3" width="10" height="8" fill="#fff" /><rect x="21" y="4" width="2" height="6" fill="#fff" /></svg>
        <svg width="23" height="20" viewBox="0 0 23 20" fill="none" stroke="#fff" strokeWidth="1.400" className="ml-[13px] shrink-0"><path d="M1 7H4L9 2V18L4 13H1Z" /><path d="M12 7Q14 10 12 13M15 5Q18 10 15 15" /><path d="M18 2Q24 10 18 18" stroke="#777" /></svg>
        <svg width="20" height="20" viewBox="0 0 20 20" fill="none" stroke="#fff" strokeWidth="1.500" className="ml-[15px] shrink-0"><path d="M1 19Q1 3 19 1" stroke="#aaa" /><path d="M5 19Q6 8 19 6M9.500 19Q10 13 19 11M14 19Q15 17 19 15.500" /></svg>
        <Fit w={36} className="ml-[16px] leading-[24px]">SWE</Fit>
        <div className="ml-[19px] flex h-[60px] w-[95px] shrink-0 flex-col items-center pt-[4px] leading-[24px]">
          <Fit w={43}>16:39</Fit>
          <Fit w={94} className="mt-[4px]">2019-09-30</Fit>
        </div>
        <div className="relative ml-[27px] h-[24px] w-[24px] shrink-0">
          <svg width="24" height="24" viewBox="0 0 24 24"><path d="M0 0H24V19H15L9 24V19H0Z" fill="#fff" /><path d="M5 6H19M5 10H19M5 14H15" stroke="#0a0a0a" strokeWidth="1.300" /></svg>
          <div className="absolute top-[11px] left-[11px] flex h-[25px] w-[25px] items-center justify-center rounded-full border border-[#888] bg-[#2b2b2b] text-[16px] font-semibold">1</div>
        </div>
        <div className="mr-[6px] ml-auto h-[60px] w-px bg-[#666]" />
      </div>
    </div>
  );
}

export default function App() {
  return (
    <div className="relative h-[1080px] w-[1920px] overflow-hidden bg-black">
      <div className="relative h-[1020px] overflow-hidden">
        <BackgroundApp />
        <Dialog />
      </div>
      <Taskbar />
    </div>
  );
}
